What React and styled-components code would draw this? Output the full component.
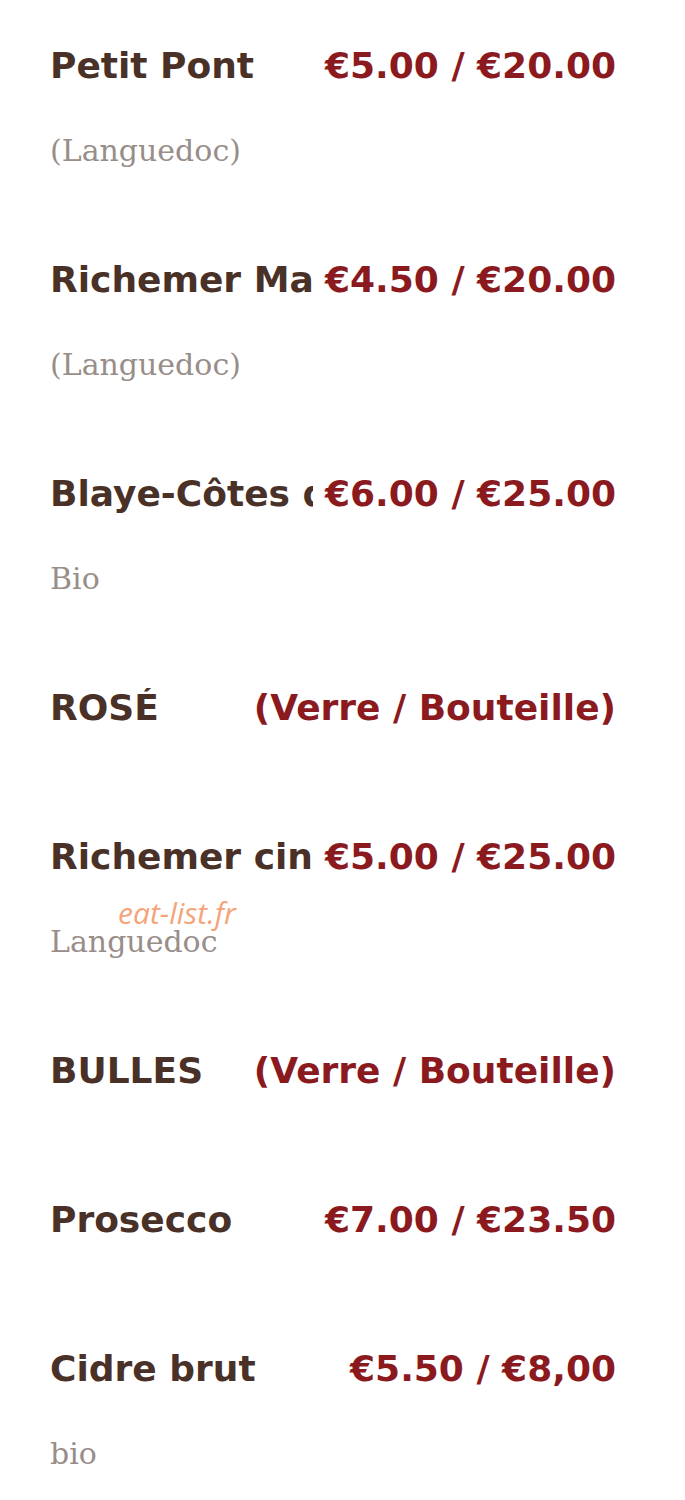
import React from 'react';
import styled, { createGlobalStyle } from 'styled-components';

const GlobalStyle = createGlobalStyle`
  body {
    margin: 0;
    background: #ffffff;
  }
`;

const Menu = styled.div`
  padding: 46px 69px 0 50px;
  font-family: "DejaVu Sans", sans-serif;
`;

const Item = styled.div`
  position: relative;
  display: flex;
  flex-direction: column;
  padding-bottom: 89px;
`;

const Row = styled.div`
  display: flex;
  align-items: baseline;
  margin-bottom: 20px;
  font-size: 36px;
  font-weight: 700;
  line-height: 40px;
`;

const Name = styled.div`
  flex: 1;
  min-width: 0;
  overflow: hidden;
  white-space: nowrap;
  color: #4a3128;
`;

const Price = styled.div`
  flex-shrink: 0;
  padding-left: 12px;
  white-space: nowrap;
  color: #8b1a1f;
`;

const Desc = styled.div`
  padding-top: 25px;
  font-family: "DejaVu Serif", serif;
  font-size: 30px;
  line-height: 40px;
  color: #988e89;
`;

const Watermark = styled.span`
  position: absolute;
  left: 68px;
  top: 55px;
  font-family: "Open Sans", sans-serif;
  font-style: italic;
  font-size: 30px;
  color: #f5a47a;
`;

const wines = [
  { name: 'Petit Pont', price: '€5.00 / €20.00', desc: '(Languedoc)' },
  { name: 'Richemer Marselan', price: '€4.50 / €20.00', desc: '(Languedoc)' },
  { name: 'Blaye-Côtes de Bordeaux', price: '€6.00 / €25.00', desc: 'Bio' },
  { name: 'ROSÉ', price: '(Verre / Bouteille)' },
  { name: 'Richemer cinsault', price: '€5.00 / €25.00', desc: 'Languedoc', mark: true },
  { name: 'BULLES', price: '(Verre / Bouteille)' },
  { name: 'Prosecco', price: '€7.00 / €23.50' },
  { name: 'Cidre brut', price: '€5.50 / €8,00', desc: 'bio' },
];

export default function App() {
  return (
    <>
      <GlobalStyle />
      <Menu>
        {wines.map((w, i) => (
          <Item key={i}>
            <Row>
              <Name>{w.name}</Name>
              <Price>{w.price}</Price>
            </Row>
            {w.desc && <Desc>{w.desc}</Desc>}
            {w.mark && <Watermark>eat-list.fr</Watermark>}
          </Item>
        ))}
      </Menu>
    </>
  );
}
